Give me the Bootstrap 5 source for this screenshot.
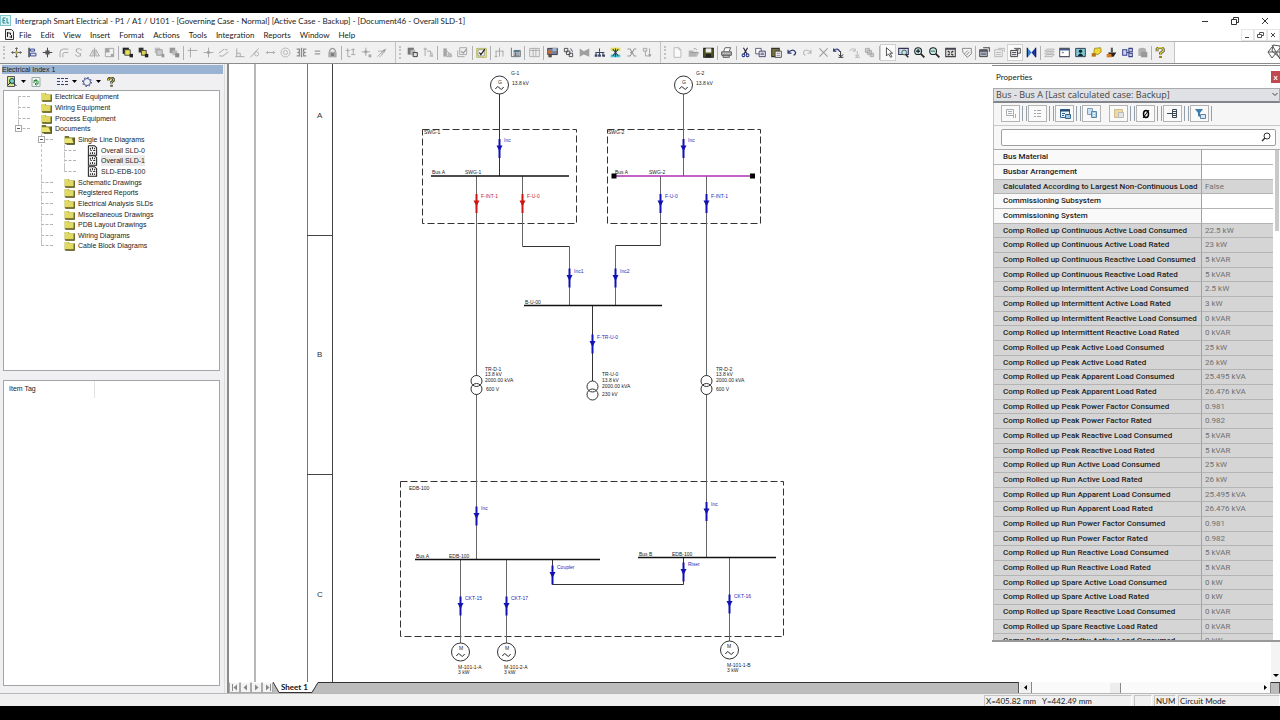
<!DOCTYPE html>
<html lang="en">
<head>
<meta charset="utf-8">
<meta name="viewport" content="width=device-width, initial-scale=1">
<title>Intergraph Smart Electrical</title>
<link href="https://cdn.jsdelivr.net/npm/bootstrap@5.3.0/dist/css/bootstrap.min.css" rel="stylesheet">
<style>
  body { background: #000; font-family: Lato, "Liberation Sans", sans-serif; font-size: 8px; line-height: 12px; color: #222; }
  .app-shell { height: 100vh; padding: 13px 0 14px; overflow: hidden; }
  button { border: 0; background: none; padding: 0; color: inherit; line-height: inherit; }
  svg { display: block; flex: none; }
  a { color: inherit; text-decoration: none; }

  /* title and menu */
  .title-bar { height: 15px; }
  .win-btns button { width: 30px; height: 14px; }
  .menu-bar { height: 14px; border-bottom: 1px solid #b4b4b4; }
  .menu-links { gap: 9px; }
  .mdi-btns button { width: 13px; height: 12px; border: 1px solid #e6e6e6; }

  /* icon strip */
  .tool-strip { height: 22px; background: #fff; border-bottom: 1px solid #8c8c8c; }
  .tool-group { background: #f0f0f0; padding: 0 6px 0 3px; border-right: 1px solid #c4c4c4; }
  .tool-group.g1 { width: 396px; } .tool-group.g2 { width: 265px; } .tool-group.g3 { width: 514px; }
  .tool-group button { width: 14px; height: 15px; }
  .tool-group button.on { background: #fafafa; outline: 1px solid #cfcfcf; }
  .grip { width: 2px; height: 13px; border-left: 2px dotted #c2c2c2; margin-right: 3px; }
  .divide { width: 1px; height: 14px; background: #b0b0b0; }

  /* left pane */
  .side-pane { width: 225px; background: #f0f0f2; padding: 1px 4px 7px 3px; font-family: "Liberation Sans", sans-serif; font-size: 7px; border-right: 1px solid #ddd; }
  .splitter { width: 4px; background: #f0f0f2; border-right: 2px solid #8a8a8a; }
  .pane-title { height: 9px; line-height: 9px; background: #9ab3d3; margin: 0 -3px 0 -1px; }
  .pane-tools { height: 16px; padding: 0 0 1px 4px; }
  .well { background: #fff; border: 1px solid #a5a5a5; }
  .tree-box { flex: 280 1 0; padding: 0 0 0 14px; min-height: 0; overflow: hidden; }
  .list-box { flex: 306 1 0; margin-top: 9px; }
  .tree-box ul { list-style: none; margin: 0; padding: 0; }
  .tree-box li ul { padding-left: 23px; }
  .tree-box li { position: relative; }
  .tree-box li::before { content: ""; position: absolute; left: 0; top: 0; bottom: 0; border-left: 1px dashed #c4c4c4; }
  .tree-box li:last-child::before { bottom: auto; height: 6px; }
  .tree-box > ul > li:first-child::before { top: 5px; }
  .node { height: 11px; line-height: 11px; display: flex; align-items: center; white-space: nowrap; }
  .node.short { height: 10px; }
  .node::before { content: ""; width: 12px; margin-right: 11px; border-top: 1px dashed #b4b4b4; }
  .node svg { margin-right: 3px; }
  .node .picked { background: #ececec; }
  .toggle-box { position: absolute; left: -3px; top: 2px; width: 7px; height: 7px; background: #fff; border: 1px solid #a8a8a8; }
  .toggle-box::before { content: ""; position: absolute; left: 1px; top: 2px; width: 3px; height: 1px; background: #555; }
  .tag-table th { font-weight: 400; height: 17px; width: 90px; padding: 0 5px; border-right: 1px solid #e2e2e2; vertical-align: middle; }

  /* drawing */
  .draw-area { position: relative; background: #fff; min-height: 0; overflow: hidden; }
  .sheet { position: absolute; inset: 0; width: 100%; height: 100%; }
  .sheet text { font-family: "Liberation Sans", sans-serif; font-size: 5px; fill: #222; }
  .sheet .zone { font-size: 8px; fill: #333; }
  .sheet .blue { fill: #2a2ab8; } .sheet .red { fill: #c8201c; }
  .v-scroll { position: absolute; right: 0; bottom: 0; width: 9px; height: 42px; background: #f4f4f4; }

  /* properties window */
  .prop-win { position: absolute; top: 1px; right: 0; bottom: 40px; width: 288px; background: #fff; border-top: 1px solid #8a8a8a; border-bottom: 2px solid #999; }
  .prop-head { height: 22px; padding-left: 4px; }
  .prop-close { width: 9px; height: 12px; background: #c0484e; color: #fff; line-height: 10px; font-weight: 700; }
  .case-pick { height: 15px; border: 1px solid #aaa; border-bottom: 2px solid #82858c; background: #e0e1e5; position: relative; margin-left: 1px; }
  .case-pick select { appearance: none; border: 0; background: transparent; width: 100%; height: 12px; padding: 0 2px; font-family: "Open Sans", sans-serif; font-size: 9px; line-height: 12px; color: #444; }
  .case-pick svg { position: absolute; right: 1px; top: 3px; }
  .prop-tools { height: 23px; background: #f6f6f7; border: 1px solid #c8c8c8; border-width: 0 0 1px 1px; padding-left: 7px; margin-left: 1px; }
  .prop-tools button { width: 19px; height: 17px; border: 1px solid #b4b4b4; background: #fafafa; margin-right: 8px; position: relative; }
  .prop-tools button.bars::after { content: ""; position: absolute; left: 20px; top: 0; width: 5px; height: 15px; border: 1px solid #94a0ac; border-width: 0 1px; }
  .prop-tools button:last-child::after { border-right-width: 0; }
  .prop-find { background: #f7f7f7; border-left: 1px solid #bbb; padding: 3px 4px 3px 7px; margin-left: 1px; border-bottom: 1px solid #aaa; position: relative; }
  .prop-find input { width: 100%; height: 17px; border: 1px solid #a0a0a0; border-radius: 2px; background: #fff; padding: 0 20px 0 4px; font-size: 8px; display: block; }
  .prop-find svg { position: absolute; right: 9px; top: 6px; }
  .prop-body { min-height: 0; overflow: hidden; margin-left: 1px; }
  .prop-grid { width: 280px; table-layout: fixed; border-collapse: separate; border-spacing: 0; border-left: 1px solid #bbb; font-family: Roboto, "Liberation Sans", sans-serif; }
  .prop-grid th, .prop-grid td { height: 15px; line-height: 13px; padding: 0; border-bottom: 1px solid #b4b4b4; white-space: nowrap; overflow: hidden; vertical-align: middle; }
  .prop-grid tr:nth-child(3n) > * { height: 14px; }
  .prop-grid th { width: 208px; font-weight: 500; color: #1c1c1c; padding-left: 9px; background: #f9f9f9; border-right: 1px solid #a2a2a2; }
  .prop-grid td { color: #707070; padding-left: 3px; background: #fff; }
  .prop-grid .ro > * { background: #d5d5d5; }
  .prop-thumb { width: 4px; height: 81px; background: #c9c9c9; margin-left: 2px; }

  /* sheet tabs and status */
  .tab-row { height: 11px; background: #f0f0f0; }
  .tab-nav button { width: 11px; height: 11px; border: 1px solid #aaa; border-top-color: #fff; background: #f3f3f3; }
  .tab-fill { background: #bcbcbc; border-top: 1px solid #333; border-right: 1px solid #555; }
  .sheet-tab { position: relative; width: 45px; }
  .sheet-tab a { position: absolute; left: 8px; top: 0; line-height: 10px; font-weight: 700; color: #111; }
  .h-scroll { width: 252px; background: #fafafa; padding-left: 1px; }
  .h-scroll .h-thumb { width: 11px; height: 10px; background: #ededed; border-right: 1px solid #888; margin-left: 78px; }
  .status-bar { height: 13px; background: #f0f0f0; border-top: 1px solid #b8b8b8; padding-top: 1px; }
  .status-bar span { border: 1px solid #c4c4c4; border-right-color: #fff; border-bottom: 0; line-height: 11px; height: 11px; padding-left: 1px; margin-right: 2px; white-space: nowrap; }
</style>
</head>
<body>
<div class="app-shell d-flex flex-column">

  <header class="bg-white">
    <div class="title-bar d-flex align-items-center">
      <svg class="ms-0 me-1" width="11" height="11" viewBox="0 0 11 11"><rect x=".5" y=".5" width="10" height="10" fill="#dff3f4" stroke="#7fc4ca"/><path d="M3 3v5M3 3h2.500M3 5.500h2M3 8h2.500M7 3v5h2" fill="none" stroke="#1d8891"/></svg>
      <div class="flex-grow-1 text-truncate">Intergraph Smart Electrical - P1 / A1 / U101 - [Governing Case - Normal] [Active Case - Backup] - [Document46 - Overall SLD-1]</div>
      <div class="win-btns d-flex">
        <button aria-label="Minimize" class="d-flex justify-content-center align-items-center"><svg width="8" height="8"><path d="M1 4.500h6" stroke="#333"/></svg></button>
        <button aria-label="Restore" class="d-flex justify-content-center align-items-center"><svg width="8" height="8"><path d="M.5 2.500h5v5h-5zM2.500 2.500v-2h5v5h-2" fill="none" stroke="#333"/></svg></button>
        <button aria-label="Close" class="d-flex justify-content-center align-items-center"><svg width="8" height="8"><path d="M1 1l6 6M7 1l-6 6" stroke="#333"/></svg></button>
      </div>
    </div>
    <nav class="menu-bar d-flex align-items-center">
      <svg class="ms-1 me-1" width="11" height="11" viewBox="0 0 10 11"><path d="M1 .5h6l2 2v8H1z" fill="#eee" stroke="#333"/><path d="M3 3v5M3 4h3M6 4v2M5 8h2M7 6v3" stroke="#222" fill="none"/></svg>
      <div class="menu-links d-flex">
        <a href="#">File</a><a href="#">Edit</a><a href="#">View</a><a href="#">Insert</a><a href="#">Format</a><a href="#">Actions</a><a href="#">Tools</a><a href="#">Integration</a><a href="#">Reports</a><a href="#">Window</a><a href="#">Help</a>
      </div>
      <div class="mdi-btns d-flex ms-auto">
        <button aria-label="Minimize document"><svg width="10" height="10"><path d="M3 7.500h4" stroke="#444"/></svg></button>
        <button aria-label="Restore document"><svg width="10" height="10"><path d="M2.500 4.500h4v3h-4zM4.500 4v-1.500h4v3h-2" fill="none" stroke="#555"/></svg></button>
        <button aria-label="Close document"><svg width="10" height="10"><path d="M3 3l4 4M7 3l-4 4" stroke="#444"/></svg></button>
      </div>
    </nav>
    <div class="tool-strip d-flex">
      <div class="tool-group g1 d-flex align-items-center justify-content-between" data-icons="grip move align cross fillet rotate mirror scale | front2 front back back2 | trim extend parallel perp tangent horiz circles sym equal lock | vert snap brush"></div>
      <div class="tool-group g2 d-flex align-items-center justify-content-between" data-icons="grip layers frame | report checkdoc | check | netgrey panel | table | imgdoc copyflow bowgrey net netcolor xnet tagnet"></div>
      <div class="tool-group g3 d-flex align-items-center justify-content-between" data-icons="grip new open save | print | cut copy paste undo redo del undo2 redo2 stack | *pointer zoomarea zoomin zoomout fit pan | props propsgrey *props2 bow | sheets window user tag3d cup nodes cyl | help"></div>
      <svg class="ms-auto" width="15" height="19" viewBox="0 0 15 19"><path d="M8 3l7 1v12l-8-7zM7 5l-4 5 4 6 8-10M3 10h12M7 3l8 14" fill="none" stroke="#555"/></svg>
    </div>
  </header>

  <main class="d-flex flex-grow-1" style="min-height:0">
    <aside class="side-pane d-flex flex-column flex-shrink-0">
      <div class="pane-title">Electrical Index 1</div>
      <div class="pane-tools d-flex align-items-center">
        <button aria-label="Filter"><svg width="10" height="11" viewBox="0 0 10 11"><path d="M.5.5h7v10h-7z" fill="#d6e88a" stroke="#556"/><circle cx="5" cy="5" r="2.500" fill="#7fd0c4" stroke="#244"/><path d="M6.500 7l3 3M1 9l3-3" stroke="#223"/></svg></button>
        <svg class="ms-1" width="6" height="4"><path d="M0 0h5L2.500 3z"/></svg>
        <button class="ms-1" aria-label="Refresh"><svg width="10" height="10" viewBox="0 0 9 10"><path d="M.5.5h8v9h-8z" fill="#eef5ee" stroke="#9aa"/><path d="M2.500 6V3.500h3M4 2l1.500 1.500L4 5M6.500 4v3h-3M5 5.500L3.500 7 5 8.500" fill="none" stroke="#1c8a2c"/></svg></button>
        <button class="ms-3 ps-0" aria-label="List options"><svg width="11" height="9"><path d="M0 1.500h3M5 1.500h1M8 1.500h3M0 4.500h3M5 4.500h1M8 4.500h3M0 7.500h3M5 7.500h1M8 7.500h3M4 1.500h4M4 7.500h4" stroke="#34406e" stroke-dasharray="3 1"/></svg></button>
        <svg class="ms-1" width="6" height="4"><path d="M0 0h5L2.500 3z"/></svg>
        <button class="ms-1" aria-label="Settings"><svg width="10" height="10"><circle cx="5" cy="5" r="3.500" fill="none" stroke="#4a558f"/><circle cx="5" cy="5" r="4.500" fill="none" stroke="#2a3780" stroke-dasharray="1.500 2"/></svg></button>
        <svg class="ms-1" width="6" height="4"><path d="M0 0h5L2.500 3z"/></svg>
        <button class="ms-1" aria-label="Help"><svg width="10" height="10" viewBox="0 0 8 10"><path d="M1.500 3.500V2l1-1h3l1 1v1.500L4.500 5v1.500" fill="none" stroke="#333" stroke-width="2.500"/><path d="M1.500 3.500V2l1-1h3l1 1v1.500L4.500 5v1.500" fill="none" stroke="#d8cc2a"/><path d="M3.500 8h2v1.500h-2z" fill="#a89b10" stroke="#333" stroke-width=".5"/></svg></button>
      </div>
      <div class="well tree-box">
        <ul id="tree">
          <li><div class="node" data-i="folder">Electrical Equipment</div></li>
          <li><div class="node" data-i="folder">Wiring Equipment</div></li>
          <li><div class="node short" data-i="folder">Process Equipment</div></li>
          <li><div class="node" data-i="folderopen">Documents</div><i class="toggle-box"></i>
            <ul>
              <li><div class="node" data-i="folderopen">Single Line Diagrams</div><i class="toggle-box"></i>
                <ul>
                  <li><div class="node short" data-i="sld">Overall SLD-0</div></li>
                  <li><div class="node" data-i="sld"><span class="picked">Overall SLD-1</span></div></li>
                  <li><div class="node" data-i="sld">SLD-EDB-100</div></li>
                </ul>
              </li>
              <li><div class="node short" data-i="folder">Schematic Drawings</div></li>
              <li><div class="node" data-i="folder">Registered Reports</div></li>
              <li><div class="node" data-i="folder">Electrical Analysis SLDs</div></li>
              <li><div class="node short" data-i="folder">Miscellaneous Drawings</div></li>
              <li><div class="node" data-i="folder">PDB Layout Drawings</div></li>
              <li><div class="node short" data-i="folder">Wiring Diagrams</div></li>
              <li><div class="node" data-i="folder">Cable Block Diagrams</div></li>
            </ul>
          </li>
        </ul>
      </div>
      <div class="well list-box">
        <table class="tag-table"><thead><tr><th scope="col">Item Tag</th></tr></thead></table>
      </div>
    </aside>
    <div class="splitter flex-shrink-0"></div>

    <section class="d-flex flex-column flex-grow-1" style="min-width:0">
      <div class="draw-area flex-grow-1">
        <svg class="sheet" role="img" aria-label="Overall single line diagram">
          <defs>
            <g id="brk"><path d="M0-9.500v19" stroke="currentColor" stroke-width="2"/><path d="M-3-3h6L0 3z" fill="currentColor"/></g>
            <g id="xfm" fill="none" stroke="#333"><circle cy="-4" r="5.500"/><circle cy="4" r="5.500"/></g>
            <g id="mach"><circle r="9" fill="#fff" stroke="#333"/><path d="M-4 4q2-4 4-1t4-1" fill="none" stroke="#222"/></g>
          </defs>
          <g transform="translate(-229 -64)">
            <path d="M255 64v640" stroke="#b8b8b8" stroke-width="2"/>
            <path d="M307.500 64v640" stroke="#777"/><path d="M332.500 64v640M307 235.500h25M307 474.500h25" stroke="#444"/>
            <g fill="none" stroke="#333" stroke-dasharray="7 3">
              <rect x="422.500" y="129.500" width="154" height="94"/>
              <rect x="607.500" y="129.500" width="153" height="94"/>
              <rect x="400.500" y="481.500" width="383" height="155"/>
            </g>
            <path d="M499.500 94v82M592.500 305v76M552.500 560v24.500h131V558M522.500 246.500h47M615.500 245.500h45" fill="none" stroke="#333"/>
            <path d="M683.500 94v82M476.500 176v200M476.500 394v165M522.500 176v70.500M569.500 246.500V305M660.500 176v69.500M615.500 245.500V305M706.500 176v200M706.500 394v163M460.500 560v83M506.500 560v83M729.500 558v83" fill="none" stroke="#666"/>
            <path d="M431 176h138M524 305.500h138M415 559.500h185M638 557.500h138" stroke="#111" stroke-width="1.500"/>
            <path d="M614 176h138" stroke="#b02cb0" stroke-width="1.500"/>
            <path d="M611.500 173.500h5v5h-5zM750 173.500h5v5h-5z"/>
            <g color="#1212b4">
              <use href="#brk" x="499.500" y="148.500"/><use href="#brk" x="683.500" y="148.500"/>
              <use href="#brk" x="660.500" y="203.500"/><use href="#brk" x="706.500" y="203.500"/>
              <use href="#brk" x="569.500" y="278"/><use href="#brk" x="615.500" y="278"/>
              <use href="#brk" x="592.500" y="344"/><use href="#brk" x="476.500" y="516"/><use href="#brk" x="706.500" y="511.500"/>
              <use href="#brk" x="552.500" y="575"/><use href="#brk" x="683.500" y="572"/>
              <use href="#brk" x="460.500" y="606"/><use href="#brk" x="506.500" y="606"/><use href="#brk" x="729.500" y="604"/>
            </g>
            <g color="#d01414"><use href="#brk" x="476.500" y="203.500"/><use href="#brk" x="522.500" y="203.500"/></g>
            <use href="#xfm" x="476.500" y="385"/><use href="#xfm" x="706.500" y="385"/><use href="#xfm" x="592.500" y="390.500"/>
            <use href="#mach" x="499.500" y="85"/><use href="#mach" x="683.500" y="85"/>
            <use href="#mach" x="460.500" y="652"/><use href="#mach" x="506.500" y="652"/><use href="#mach" x="729.500" y="650"/>
            <text x="498" y="84">G</text><text x="682" y="84">G</text>
            <text x="459" y="650">M</text><text x="505" y="650">M</text><text x="727" y="648">M</text>
            <text class="zone" x="317" y="118">A</text><text class="zone" x="317" y="357">B</text><text class="zone" x="317" y="597">C</text>
            <text x="511" y="75">G-1</text><text x="512" y="85">13.8 kV</text>
            <text x="696" y="75">G-2</text><text x="696" y="85">13.8 kV</text>
            <text x="424" y="134">SWG-1</text><text x="608" y="134">SWG-2</text>
            <text x="432" y="174">Bus A</text><text x="465" y="174">SWG-1</text>
            <text x="615" y="174">Bus A</text><text x="649" y="174">SWG-2</text>
            <text x="525" y="304">B-U-00</text>
            <text x="485" y="371">TR-D-1</text><text x="485" y="376">13.8 kV</text><text x="485" y="382">2000.00 kVA</text><text x="486" y="391">600 V</text>
            <text x="716" y="371">TR-D-2</text><text x="716" y="376">13.8 kV</text><text x="716" y="382">2000.00 kVA</text><text x="716" y="391">600 V</text>
            <text x="602" y="376">TR-U-0</text><text x="602" y="382">13.8 kV</text><text x="602" y="388">2000.00 kVA</text><text x="602" y="396">230 kV</text>
            <text x="409" y="490">EDB-100</text><text x="416" y="558">Bus A</text><text x="449" y="558">EDB-100</text>
            <text x="639" y="556">Bus B</text><text x="672" y="556">EDB-100</text>
            <text x="458" y="669">M-101-1-A</text><text x="458" y="674">3 kW</text>
            <text x="504" y="669">M-101-2-A</text><text x="504" y="674">3 kW</text>
            <text x="727" y="667">M-101-1-B</text><text x="727" y="672">3 kW</text>
            <text class="blue" x="504" y="142">Inc</text><text class="blue" x="688" y="142">Inc</text>
            <text class="red" x="481" y="198">F-INT-1</text><text class="red" x="527" y="198">F-U-0</text>
            <text class="blue" x="665" y="198">F-U-0</text><text class="blue" x="711" y="198">F-INT-1</text>
            <text class="blue" x="574" y="273">Inc1</text><text class="blue" x="620" y="273">Inc2</text>
            <text class="blue" x="597" y="339">F-TR-U-0</text>
            <text class="blue" x="481" y="510">Inc</text><text class="blue" x="711" y="506">Inc</text>
            <text class="blue" x="557" y="569">Coupler</text><text class="blue" x="688" y="566">Riser</text>
            <text class="blue" x="465" y="600">CKT-15</text><text class="blue" x="511" y="600">CKT-17</text><text class="blue" x="734" y="598">CKT-16</text>
          </g>
        </svg>
        <div class="v-scroll d-flex align-items-end justify-content-center pb-1"><svg width="6" height="4"><path d="M0 0h6L3 3z"/></svg></div>

        <div class="prop-win d-flex flex-column">
          <div class="prop-head d-flex align-items-center justify-content-between"><span>Properties</span><button class="prop-close" aria-label="Close properties">x</button></div>
          <div class="case-pick"><select aria-label="Selected item"><option>Bus - Bus A [Last calculated case: Backup]</option></select><svg width="6" height="5"><path d="M.5 1l2.500 2.500L5.500 1" fill="none" stroke="#444"/></svg></div>
          <div class="prop-tools d-flex align-items-center flex-shrink-0">
            <button class="bars" aria-label="Sort"><svg class="mx-auto" width="12" height="11"><path d="M1.500 1.500h7v6h-7zM3 3.500h4M3 5.500h4M8.500 6v4M10.500 6v4" fill="none" stroke="#a9adb2"/></svg></button>
            <button class="bars" aria-label="Group"><svg class="mx-auto" width="12" height="11"><path d="M2 2.500h2M5 2.500h4M2 5.500h2M5 5.500h4M2 8.500h2M5 8.500h4" stroke="#a4a8ad"/></svg></button>
            <button class="bars" aria-label="Case view"><svg class="mx-auto" width="12" height="12"><path d="M1.500 1.500h9v8h-9z" fill="#e6f0f8" stroke="#34678e"/><path d="M1 2.500h10" stroke="#234c70" stroke-width="2"/><path d="M3 5.500h3M3 7.500h2" stroke="#34678e"/><path d="M6.500 6.500h5v4h-5z" fill="#9fc4e2" stroke="#34678e"/></svg></button>
            <button aria-label="Copy"><svg class="mx-auto" width="12" height="11"><path d="M1.500.5h5v6h-5z" fill="#cfe0ee" stroke="#7ba0bd"/><path d="M5.500 3.500h5v6h-5z" fill="#a8cbe4" stroke="#5b87aa"/><path d="M7 5.500h2M7 7.500h2" stroke="#fff"/></svg></button>
            <button class="bars" aria-label="Paste"><svg class="mx-auto" width="12" height="11"><path d="M1.500 1.500h8v8h-8z" fill="#ecd9a8" stroke="#d2bd8a"/><path d="M5.500 4.500h5v5h-5z" fill="#e4e4e4" stroke="#bbb"/></svg></button>
            <button class="bars" aria-label="Null value"><svg class="mx-auto" width="12" height="12"><ellipse cx="6" cy="6" rx="2.500" ry="3.500" fill="none" stroke="#000" stroke-width="1.500"/><path d="M3 10l6-8" stroke="#000"/></svg></button>
            <button class="bars" aria-label="Expand"><svg class="mx-auto" width="12" height="11"><path d="M0 5.500h5M5.500 1.500h4v8h-4zM5 3.500h5M5 5.500h5M5 7.500h5" fill="none" stroke="#3a4752"/></svg></button>
            <button class="bars" aria-label="Filter"><svg class="mx-auto" width="12" height="12"><path d="M1 1h8L6 5v4L4 8V5z" fill="#3f7fb0"/><path d="M6.500 6.500h5v4h-5z" fill="#dbe8f2" stroke="#5c86a8"/></svg></button>
          </div>
          <div class="prop-find"><input type="text" aria-label="Search properties"><svg width="10" height="10"><circle cx="6" cy="4" r="3" fill="none" stroke="#333"/><path d="M4 6L1 9" stroke="#333" stroke-width="1.500"/></svg></div>
          <div class="prop-body d-flex flex-grow-1 align-items-start">
            <table class="prop-grid"><tbody id="props"></tbody></table>
            <div class="prop-thumb"></div>
          </div>
        </div>
      </div>

      <div class="tab-row d-flex flex-shrink-0">
        <div class="tab-nav d-flex">
          <button aria-label="First"><svg width="9" height="9"><path d="M2.500 1v7" stroke="#888"/><path d="M7 1.500v6L3.500 4.500z" fill="#888"/></svg></button>
          <button aria-label="Previous"><svg width="9" height="9"><path d="M6 1.500v6L2.500 4.500z" fill="#888"/></svg></button>
          <button aria-label="Next"><svg width="9" height="9"><path d="M3 1.500v6l3.500-3z" fill="#888"/></svg></button>
          <button aria-label="Last"><svg width="9" height="9"><path d="M7.500 1v7" stroke="#888"/><path d="M3 1.500v6l3.500-3z" fill="#888"/></svg></button>
        </div>
        <div class="sheet-tab"><svg width="45" height="11"><path d="M0 0h45v11H0z" fill="#bcbcbc"/><path d="M0 0l6 10h33l6-10z" fill="#fff"/><path d="M0 0l6 10.500h33L45 .5" fill="none" stroke="#333"/></svg><a href="#">Sheet 1</a></div>
        <div class="tab-fill flex-grow-1"></div>
        <div class="h-scroll d-flex align-items-center">
          <svg width="12" height="11"><path d="M0 0h11v11H0z" fill="#f0f0f0"/><path d="M11.500 0v11" stroke="#888"/><path d="M7 3v5L4 5.500z"/></svg>
          <div class="h-thumb"></div>
          <svg class="ms-auto" width="11" height="11"><path d="M10.500 0v11" stroke="#888"/><path d="M4 3v5l3-2.500z"/></svg>
        </div>
        <div class="tab-fill" style="width:9px"></div>
      </div>
    </section>
  </main>

  <footer class="status-bar d-flex flex-shrink-0 justify-content-end">
    <span style="width:148px">X=405.82 mm&nbsp;&nbsp; Y=442.49 mm</span><span style="width:18px"></span><span style="width:22px">NUM</span><span class="me-0" style="width:102px">Circuit Mode</span>
  </footer>
</div>

<script>
// Icon artwork on a 16-unit grid
const G = '#a2a2a2', D = '#333';
const ln = (d, c = G, w = 1.3, f = 'none') => `<path d="${d}" fill="${f}" stroke="${c}" stroke-width="${w}"/>`;
const fl = (d, c) => `<path d="${d}" fill="${c}"/>`;
const ICON = {
  move: ln('M8 1v14M1 8h14M6 3l2-2 2 2M6 13l2 2 2-2M3 6L1 8l2 2M13 6l2 2-2 2', '#555') + fl('M6 6h4v4H6z', '#b9b44a'),
  align: ln('M3 1v14', D, 2) + ln('M5 3h6v3H5zM5 9h8v4H5z', '#2c3d8c', 1.3, '#dfe4f5'),
  cross: ln('M8 1v14M1 8h14', D, 1.3) + fl('M5 5h6v6H5z', '#555'),
  fillet: ln('M3 15V8q0-5 5-5h7M7 15v-4q0-3 3-3h5'),
  rotate: ln('M13 5Q10 1 5 3M5 3v4M3 11q3 4 8 2v-4M4 6l7 5'),
  mirror: ln('M8 1v14M6 4v9H1zM10 4v9h5z'),
  scale: ln('M2 2h12v12H2z') + fl('M2 2h6v6H2zM10 10h4v4h-4z', G),
  front2: fl('M1 1h9v9H1z', '#222') + fl('M4 4h8v8H4z', '#e9e05a') + ln('M4 4h8v8H4z', '#444') + fl('M11 10h5v5h-5z', '#222'),
  front: fl('M1 1h7v7H1z', '#333') + ln('M5 5h7v7H5z', '#444', 1.3, '#d8cf52') + fl('M10 10h5v5h-5z', '#222'),
  back: fl('M1 1h8v8H1z', '#c0c0c0') + ln('M4 4h8v8H4z', '#999', 1.3, '#ccc') + fl('M11 10h4v5h-4z', '#999'),
  back2: fl('M1 1h8v8H1z', '#999') + fl('M5 5h7v7H5z', '#bbb') + fl('M9 9h6v6H9z', '#8c8c8c'),
  trim: ln('M5 1v14M1 5h14'), extend: ln('M8 1v14M1 8h14') + fl('M6 6h4v4H6z', G),
  parallel: ln('M1 9l8-6M6 14l9-7M2 13h4M10 4h4'), perp: ln('M2 14h13M4 2v12M4 9h5v5'),
  tangent: ln('M2 15L14 2') + '<circle cx="11" cy="10" r="3" fill="none" stroke="#a2a2a2"/>',
  horiz: ln('M2 8h12M4 6L2 8l2 2M12 6l2 2-2 2'),
  circles: '<circle cx="8" cy="8" r="6.500" fill="none" stroke="#a2a2a2"/><circle cx="8" cy="8" r="3" fill="none" stroke="#a2a2a2"/>',
  sym: ln('M1 3h4v4l-2 1 2 1v4H1M15 3h-4v4l2 1-2 1v4h4M8 1v14', '#8a8a8a', 1.8),
  equal: ln('M4 6h8M4 10h8', '#999', 1.5), lock: ln('M4 8V5q4-6 8 0v3', '#999', 1.8) + fl('M2 7h12v8H2z', '#aaa') + fl('M6 9h4v4H6z', '#777'),
  vert: ln('M4 2v12M1 5h6M4 14h4M12 2v9M9 11h6M9 4h5'), snap: ln('M7 1v12M1 7h12') + fl('M5 5h4v4H5zM11 11h4v4h-4z', G),
  brush: ln('M2 14l8-8M5 15l8-9M3 6h6v5', '#aaa') + fl('M9 5l6-3-3 6z', '#999'),
  layers: fl('M1 1h9v10H1z', '#777') + fl('M5 4h7v8H5z', '#b5b5b5') + ln('M9 8h6v6H9z', D, 1.3, '#ddd'),
  frame: ln('M1 3h5M3 1v12M6 6h5v5M9 13h6M13 8v6'), report: fl('M2 2h5v12H2z', '#a5a5a5') + ln('M7 6l7 6v2H7', '#999') + fl('M8 9h6v5H8z', '#bbb'),
  checkdoc: ln('M4 1h10v10H4zM1 5v9h10') + ln('M6 6l3 3 5-6', '#999', 1.8),
  check: ln('M1 2h14v13H1z', '#b3b354', 1.3, '#f0f0b0') + ln('M3 4h9v9H3z', '#777', 1, '#fff') + ln('M5 8l2 3 6-8', '#222', 1.8),
  netgrey: ln('M8 1v5M2 6h12M3 6v8M8 6v8M13 6v8M1 14h4'), panel: ln('M2 1v13h13V5H6', '#5f6b74') + fl('M5 5h9v3H5z', '#4c7a89') + ln('M5 10h9M5 12h9M8 8v6', '#667'),
  table: ln('M1 2h14v12H1zM6 2v12M10 2v12M1 5h14', '#aaa'),
  imgdoc: ln('M1 2h14v9H1z', '#334', 1.3, '#7b7f9a') + fl('M1 5h5v4H1z', '#c96e2e') + fl('M8 1h6v5H8z', '#9cb6cc') + fl('M2 10h5v5H2z', '#5c4a3a'),
  copyflow: ln('M2 2h5v5H2zM5 6h5v5H5zM9 9h5v5H9z', '#444') + ln('M11 2l3 5', '#446'),
  bowgrey: fl('M1 2l6 4 8-4v12l-8-3-6 3z', '#a0a0a0'), net: ln('M8 2v5M2 8h13M3 8v5M8 8v5M13 8v5', '#3c4466', 1.5) + fl('M1 11h4v3H1zM6 11h4v3H6zM12 11h4v3h-4z', '#3c4466'),
  netcolor: fl('M1 1h14v5H1z', '#e5dc55') + fl('M1 11h14v4H1z', '#4cc3d6') + ln('M4 3l8 10M12 3L4 13M8 2v12', '#245', 1.5),
  xnet: ln('M2 3h4l6 10h3M2 13h4l6-10h3M6 8h4', '#999', 1.6), tagnet: ln('M2 2h5v4H2zM5 6v7h5M11 2v8', '#a0a0a0') + fl('M9 10l5 1-3 4z', '#999'),
  new: ln('M3 1h7l3 3v11H3zM10 1v3h3', '#b0b0b0', 1.2, '#fafafa'), open: fl('M1 5h6l1 2h6l-3 7H1z', '#b4b4b4') + ln('M4 8h11l-3 6M8 3q3-2 5 1', '#999'),
  save: ln('M1 2h14v13H1z', '#222', 1.5, '#555a20') + fl('M4 2h8v6H4z', '#ededed') + fl('M4 10h8v5H4z', '#222'),
  print: ln('M4 6l2-5h8l-2 5', '#444', 1.2, '#fff') + ln('M1 7h14v5H1z', '#444', 1.3, '#bbb') + ln('M3 12h9v3H3z', '#444', 1.2, '#ccc'),
  cut: ln('M5 1l5 9M11 1L6 10', '#223', 1.5) + '<circle cx="5" cy="12" r="2" fill="none" stroke="#26368c" stroke-width="1.500"/><circle cx="11" cy="12" r="2" fill="none" stroke="#26368c" stroke-width="1.500"/>',
  copy: ln('M1 2h8v8H1z', '#446', 1.2, '#fff') + ln('M6 6h9v8H6z', '#335', 1.2, '#e8ebf7') + ln('M8 9h5M8 11h5', '#335', 1),
  paste: ln('M1 2h11v12H1z', '#333', 1.5, '#77733c') + ln('M6 6h9v9H6z', '#333', 1.2, '#fff') + ln('M8 9h5M8 12h5', '#446', 1),
  undo: ln('M3 4v5h5M3 8q8-7 11 0 0 3-3 4', '#2c3770', 1.8), redo: ln('M13 4v5H8M13 8Q5 1 2 8q0 3 3 4', '#b5b5b5', 1.5),
  del: ln('M2 2l12 12M14 2L2 14', '#999', 1.5), undo2: ln('M1 2v4h4M1 5q6-5 9 2', '#2c3770', 1.8) + ln('M11 6v8M8 11l3 3 4-3M8 15h7', '#222', 1.3),
  redo2: ln('M9 2v4H5M9 5Q4 0 1 6M12 6v8M9 11l3 3 3-3M9 15h7', '#b0b0b0'), stack: ln('M2 2h6v6H2zM5 5h6v6H5zM9 9h5v5H9z', '#aaa', 1.3, '#ccc'),
  pointer: ln('M5 1v12l3-3 3 5 2-1-3-5h4z', '#333', 1.2, '#fff'), zoomarea: ln('M1 2h14v9H1z', '#335', 1.5, '#cfd9e6') + '<circle cx="9" cy="8" r="3.500" fill="#bfe4e0" stroke="#233"/>' + ln('M11 11l4 4', '#223', 2),
  zoomin: '<circle cx="6" cy="6" r="5" fill="#c3ebe6" stroke="#222" stroke-width="1.500"/>' + ln('M10 10l5 5', '#222', 2.5) + ln('M3 6h6M6 3v6', '#112', 1.5),
  zoomout: '<circle cx="6" cy="6" r="5" fill="#c3ebe6" stroke="#222" stroke-width="1.500"/>' + ln('M10 10l5 5', '#222', 2.5) + ln('M3 6h6', '#244', 1.2),
  fit: ln('M1 2h14v12H1z', '#444', 1.5, '#ddd') + fl('M1 2h14v2H1z', '#445') + ln('M4 6l3 2M12 6L9 8M4 12l3-2M12 12l-3-2', '#333', 1.8),
  pan: ln('M2 2h13v8l-6 5-6-7zM5 10l5-5M8 12l4-5', '#777', 1.2, '#f4f4f4'),
  props: ln('M1 4h11v10H1z', '#333', 1.3, '#bcc2cf') + fl('M1 4h11v3H1z', '#556') + ln('M6 1h9v6', '#444', 1.5) + ln('M3 9h7M3 11h7', '#445', 1),
  propsgrey: ln('M1 4h11v10H1zM6 2h9v5M3 8h7M3 11h7', '#b0b0b0', 1.2, '#eee'), props2: ln('M1 5h10v9H1z', '#333', 1.3, '#e6e9f0') + ln('M6 2h9v7h-4M3 8h6M3 11h6M8 4h5', '#333', 1.2),
  bow: fl('M1 1h2v14H1zM13 1h2v14h-2z', '#223') + fl('M3 2l5 6-5 6z', '#2b7fd0') + fl('M13 2L8 8l5 6z', '#1b2b9c'),
  sheets: ln('M4 3h11l-3 3H1zM4 7h11l-3 3H1zM4 11h11l-3 3H1z', '#aaa', 1.1, '#e4e4e4'), window: ln('M1 2h14v12H1z', '#556', 1.5, '#fff') + ln('M1 4h14', '#34508a', 2) + fl('M4 7h3v2H4z', '#889'),
  user: ln('M1 2h14v12H1z', '#234', 1.3, '#7fc9d2') + '<circle cx="8" cy="6" r="2.500" fill="#123"/>' + fl('M4 13q4-7 8 0z', '#123'),
  tag3d: ln('M5 2l9-1 1 6-5 4-6-1z', '#8a7410', 1, '#f0d732') + fl('M1 9h6v5H1z', '#b87514'), cup: fl('M3 8h12l-4 6H6z', '#2a211c') + fl('M7 1h3v7H7z', '#555') + fl('M1 10h7v5H1z', '#d87b1e'),
  nodes: ln('M1 4h6v8H1zM7 8h4M10 2h5v5h-5zM10 9h5v5h-5z', '#39408a', 1.5, '#cfd3ee'), cyl: fl('M2 3q6-4 11 0v10H2z', '#b0b0b0') + fl('M6 7h9v8H6z', '#999'),
  help: ln('M3 6V3l2-2h5l2 2v3L8 9v2', '#444', 4) + ln('M3 6V3l2-2h5l2 2v3L8 9v2', '#d9cf35', 2) + fl('M6 13h4v3H6z', '#8c8210'),
  folder: fl('M1 3h6l1 2h7v10H1z', '#8a8636') + fl('M1 3h5l1 2h7v8H1z', '#e0da62') + ln('M15 5v10H2', '#55521e', 1.5),
  folderopen: fl('M1 3h6l1 2h7v10H1z', '#77732c') + fl('M1 6h10l3 7H1z', '#ebe670') + ln('M15 5v10H4', '#44421a', 1.5),
  sld: ln('M2 1h9l3 3v11H2z', '#222', 1.5, '#f4f4f4') + ln('M5 4v3M8 3v3M5 8h2M9 8h3M5 11v2M8 10v3M11 11v2M11 4v2', '#333', 1.5)
};
const svg = (k, s) => `<svg width="${s}" height="${s}" viewBox="0 0 16 16">${ICON[k]}</svg>`;
document.querySelectorAll('[data-icons]').forEach(g => {
  g.innerHTML = g.dataset.icons.split(' ').map(k => {
    if (k === 'grip') return '<i class="grip"></i>';
    if (k === '|') return '<i class="divide"></i>';
    const on = k[0] === '*'; if (on) k = k.slice(1);
    return `<button aria-label="${k}" class="d-flex align-items-center justify-content-center${on ? ' on' : ''}">${svg(k, 11)}</button>`;
  }).join('');
});
document.querySelectorAll('[data-i]').forEach(n => n.insertAdjacentHTML('afterbegin', svg(n.dataset.i, 11)));

// Property rows: name, value (a value marks the row read-only)
const rows = [['Bus Material', ''], ['Busbar Arrangement', ''], ['Calculated According to Largest Non-Continuous Load', 'False'], ['Commissioning Subsystem', ''], ['Commissioning System', '']];
const add = (n, ...v) => v.forEach((x, i) => rows.push([`Comp Rolled up ${n} ${i ? 'Rated' : 'Consumed'}`, x]));
add('Continuous Active Load', '22.5 kW', '23 kW');
add('Continuous Reactive Load', '5 kVAR', '5 kVAR');
add('Intermittent Active Load', '2.5 kW', '3 kW');
add('Intermittent Reactive Load', '0 kVAR', '0 kVAR');
add('Peak Active Load', '25 kW', '26 kW');
add('Peak Apparent Load', '25.495 kVA', '26.476 kVA');
add('Peak Power Factor', '0.981', '0.982');
add('Peak Reactive Load', '5 kVAR', '5 kVAR');
add('Run Active Load', '25 kW', '26 kW');
add('Run Apparent Load', '25.495 kVA', '26.476 kVA');
add('Run Power Factor', '0.981', '0.982');
add('Run Reactive Load', '5 kVAR', '5 kVAR');
add('Spare Active Load', '0 kW', '0 kW');
add('Spare Reactive Load', '0 kVAR', '0 kVAR');
add('Standby Active Load', '0 kW');
document.getElementById('props').innerHTML = rows.map(([n, v]) => `<tr class="${v ? 'ro' : ''}"><th scope="row">${n}</th><td>${v}</td></tr>`).join('');
</script>
<script src="https://cdn.jsdelivr.net/npm/bootstrap@5.3.0/dist/js/bootstrap.bundle.min.js"></script>
</body>
</html>
